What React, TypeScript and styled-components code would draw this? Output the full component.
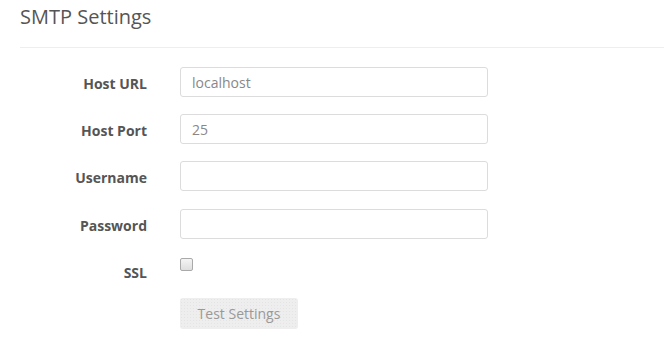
import React from "react";
import styled, { createGlobalStyle } from "styled-components";

const Global = createGlobalStyle`
  html, body { margin: 0; padding: 0; background: #fff; }
  body { font-family: "Open Sans", "Liberation Sans", sans-serif; color: #555; }
  * { box-sizing: border-box; }
`;

const Page = styled.div`
  padding: 0 0 0 20px;
`;

const Title = styled.h2`
  margin: 0;
  padding-top: 3px;
  font-size: 20px;
  line-height: 28px;
  font-weight: 400;
  color: #555;
  padding-bottom: 16px;
  border-bottom: 1px solid #eee;
`;

const Form = styled.form`
  display: grid;
  grid-template-columns: 127px 308px;
  column-gap: 33px;
  row-gap: 17.2px;
  padding-top: 19px;
  align-items: start;
`;

const Label = styled.label`
  text-align: right;
  font-weight: 700;
  font-size: 14px;
  line-height: 20px;
  padding-top: 7px;
  color: #555;
`;

const Input = styled.input`
  width: 308px;
  height: 30px;
  border: 1px solid #dcdcdc;
  border-radius: 3px;
  padding: 0 11px;
  font-family: "Open Sans", "Liberation Sans", sans-serif;
  font-size: 14px;
  color: #888;
  outline: none;
`;

const Check = styled.span`
  display: block;
  width: 13px;
  height: 13px;
  margin-top: 2px;
  border: 1px solid #a9a9a9;
  border-radius: 2px;
  background: linear-gradient(#f4f4f4, #dedede);
`;

const Button = styled.button`
  grid-column: 2;
  justify-self: start;
  width: 118px;
  height: 31px;
  margin-top: -2px;
  border: none;
  border-radius: 3px;
  background-color: #eeeeee;
  background-image: radial-gradient(#e4e4e4 0.6px, transparent 0.7px);
  background-size: 3px 3px;
  font-family: "Open Sans", "Liberation Sans", sans-serif;
  font-size: 14px;
  color: #999;
  padding: 0;
`;

export default function App() {
  return (
    <Page>
      <Global />
      <Title>SMTP Settings</Title>
      <Form onSubmit={(e) => e.preventDefault()}>
        <Label>Host URL</Label>
        <Input defaultValue="localhost" />
        <Label>Host Port</Label>
        <Input defaultValue="25" />
        <Label>Username</Label>
        <Input />
        <Label>Password</Label>
        <Input type="password" />
        <Label>SSL</Label>
        <Check />
        <Button type="button">Test Settings</Button>
      </Form>
    </Page>
  );
}
